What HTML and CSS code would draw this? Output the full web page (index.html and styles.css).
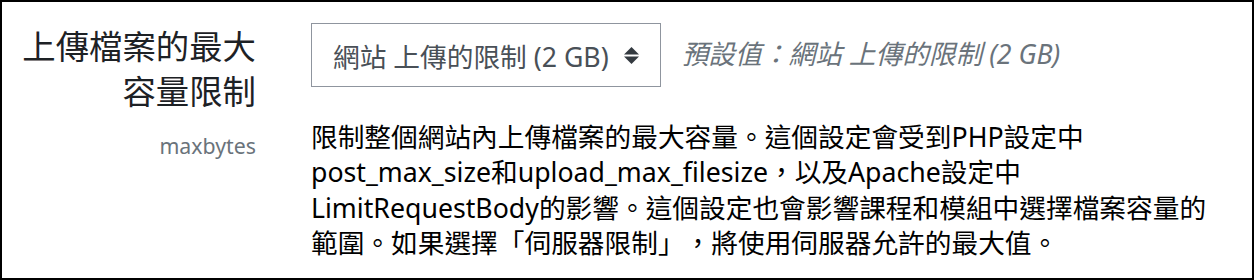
FILE: index.html
```html
<!DOCTYPE html>
<html lang="zh-Hant">
<head>
    <meta charset="UTF-8">
    <title>上傳檔案的最大容量限制</title>
    <link rel="stylesheet" href="styles.css">
</head>
<body>
<div class="setting">
    <div class="setting-label">
        <h3>上傳檔案的最大容量限制</h3>
        <span class="setting-name">maxbytes</span>
    </div>
    <div class="setting-body">
        <div class="setting-row">
            <div class="custom-select">
                <span>網站 上傳的限制 (2 GB)</span>
                <svg class="sort-icon" width="15" height="17" viewBox="0 0 15 17">
                    <path d="M7.5 0 L15 7.5 L0 7.5 Z" fill="#343a40"/>
                    <path d="M0 9.5 L15 9.5 L7.5 17 Z" fill="#343a40"/>
                </svg>
            </div>
            <div class="default-info">預設值：網站 上傳的限制 (2 GB)</div>
        </div>
        <div class="description">
            限制整個網站內上傳檔案的最大容量。這個設定會受到PHP設定中post_max_size和upload_max_filesize，以及Apache設定中LimitRequestBody的影響。這個設定也會影響課程和模組中選擇檔案容量的範圍。如果選擇「伺服器限制」，將使用伺服器允許的最大值。
        </div>
    </div>
</div>
</body>
</html>
```

FILE: styles.css
```css
html, body {
    margin: 0;
    background: #ffffff;
    font-family: "Noto Sans", "Noto Sans CJK TC", sans-serif;
    color: #1d2125;
    text-spacing-trim: space-all;
}
.setting {
    display: flex;
    width: 1254px;
    height: 280px;
    box-sizing: border-box;
    border: 2px solid #000000;
    overflow: hidden;
}
.setting-label {
    width: 278px;
    box-sizing: border-box;
    padding: 22px 24px 0 10px;
    text-align: right;
}
.setting-label h3 {
    margin: 0;
    font-size: 33.4px;
    font-weight: normal;
    line-height: 45px;
    color: #1d2125;
}
.setting-name {
    display: block;
    margin-top: 16px;
    font-size: 21.3px;
    line-height: 32px;
    color: #6a737b;
}
.setting-body {
    flex: 1;
    padding: 21px 0 0 31px;
}
.setting-row {
    display: flex;
    align-items: flex-start;
}
.custom-select {
    display: flex;
    align-items: center;
    height: 64px;
    box-sizing: border-box;
    padding: 0 21px 0 21px;
    border: 1px solid #8f959e;
    font-size: 26.7px;
    color: #495057;
}
.sort-icon {
    margin-left: 15px;
}
.default-info {
    margin: 11px 0 0 21px;
    font-size: 26.7px;
    line-height: 40px;
    font-style: italic;
    color: #6a737b;
}
.description {
    width: 910px;
    margin-top: 32px;
    font-size: 26.7px;
    line-height: 35.4px;
    color: #000000;
}
```
